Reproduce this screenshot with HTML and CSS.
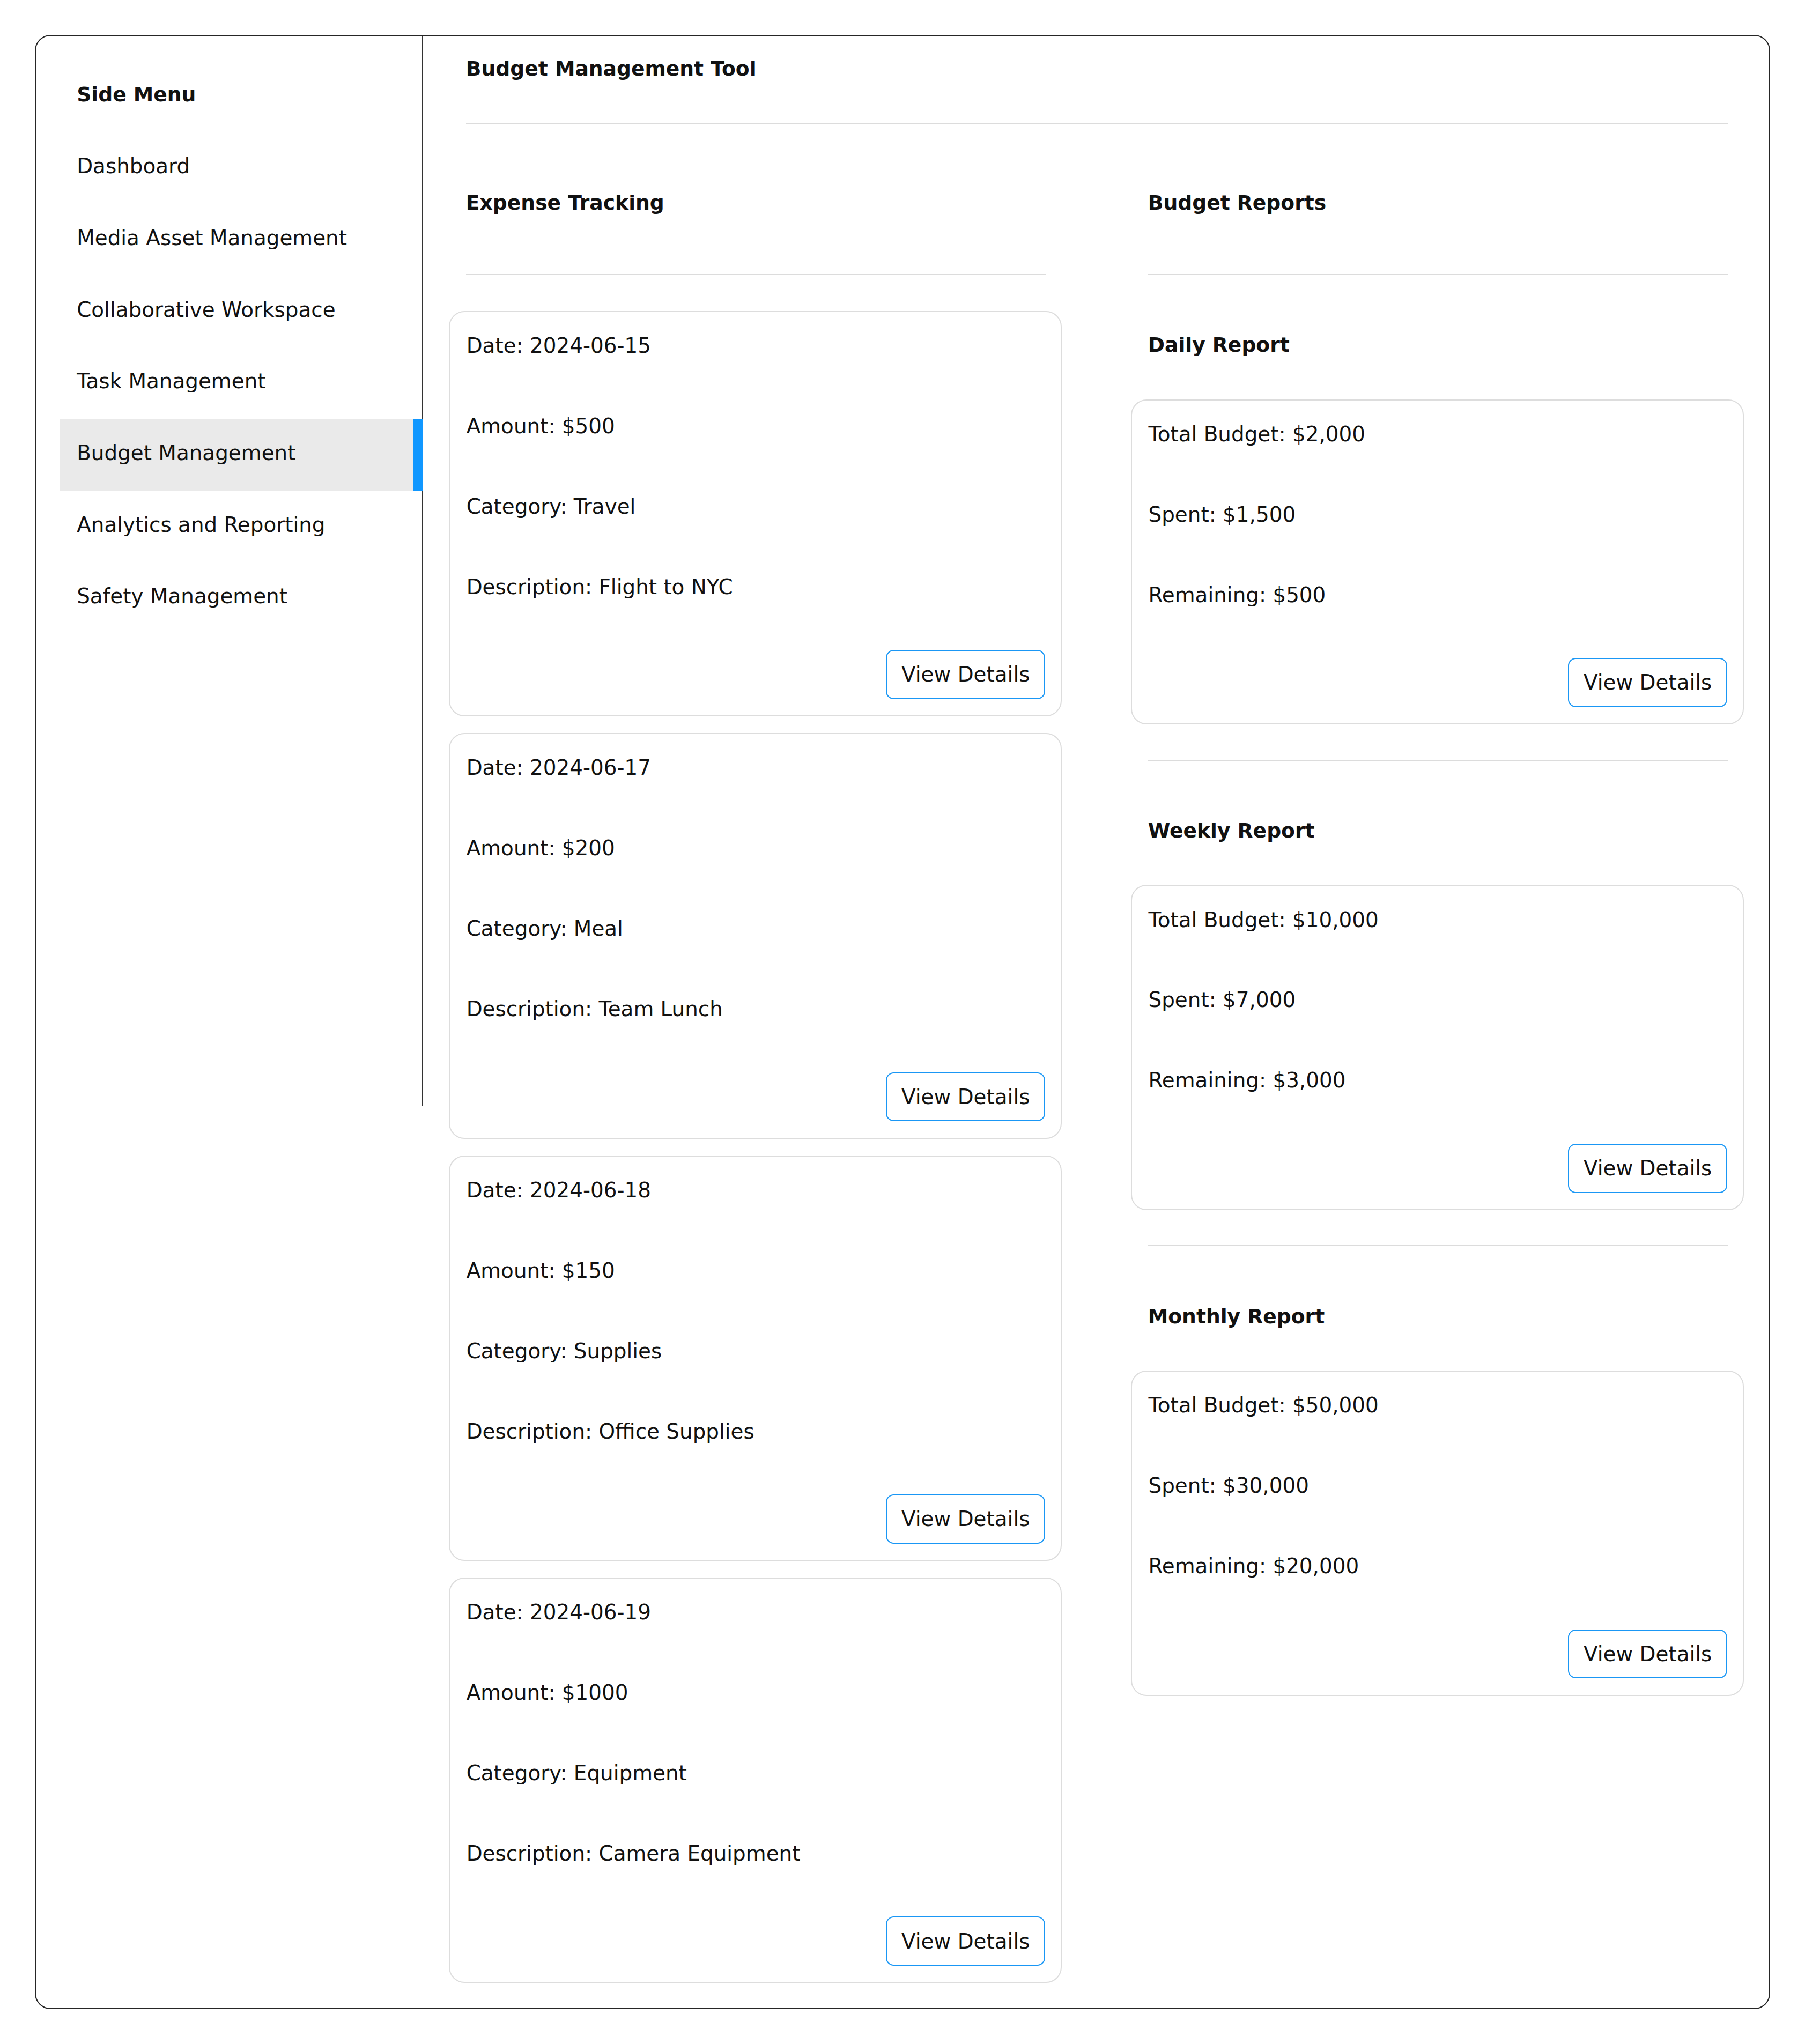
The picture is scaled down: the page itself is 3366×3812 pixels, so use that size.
FILE: index.html
```html
<!DOCTYPE html>
<html lang="en">
<head>
<meta charset="utf-8">
<title>Budget Management Tool</title>
<link rel="stylesheet" href="styles.css">
</head>
<body>
<div class="page">
  <div class="frame">
    <aside class="sidebar">
      <h2 class="side-title">Side Menu</h2>
      <nav class="menu">
        <a class="menu-item">Dashboard</a>
        <a class="menu-item">Media Asset Management</a>
        <a class="menu-item">Collaborative Workspace</a>
        <a class="menu-item">Task Management</a>
        <a class="menu-item active">Budget Management</a>
        <a class="menu-item">Analytics and Reporting</a>
        <a class="menu-item">Safety Management</a>
      </nav>
    </aside>
    <main class="main">
      <div class="head">
        <h1 class="heading">Budget Management Tool</h1>
        <hr class="divider top-divider">
      </div>
      <div class="columns">
        <section class="col">
          <div class="head">
            <h2 class="heading">Expense Tracking</h2>
            <hr class="divider col-divider">
          </div>
          <div class="card-list">
            <div class="card">
              <p>Date: 2024-06-15</p>
              <p>Amount: $500</p>
              <p>Category: Travel</p>
              <p>Description: Flight to NYC</p>
              <div class="actions"><button class="btn">View Details</button></div>
            </div>
            <div class="card">
              <p>Date: 2024-06-17</p>
              <p>Amount: $200</p>
              <p>Category: Meal</p>
              <p>Description: Team Lunch</p>
              <div class="actions"><button class="btn">View Details</button></div>
            </div>
            <div class="card">
              <p>Date: 2024-06-18</p>
              <p>Amount: $150</p>
              <p>Category: Supplies</p>
              <p>Description: Office Supplies</p>
              <div class="actions"><button class="btn">View Details</button></div>
            </div>
            <div class="card">
              <p>Date: 2024-06-19</p>
              <p>Amount: $1000</p>
              <p>Category: Equipment</p>
              <p>Description: Camera Equipment</p>
              <div class="actions"><button class="btn">View Details</button></div>
            </div>
          </div>
        </section>
        <section class="col">
          <div class="head">
            <h2 class="heading">Budget Reports</h2>
            <hr class="divider col-divider">
          </div>
          <div class="report">
            <div class="head"><h3 class="heading report-title">Daily Report</h3></div>
            <div class="card report-card">
              <p>Total Budget: $2,000</p>
              <p>Spent: $1,500</p>
              <p>Remaining: $500</p>
              <div class="actions"><button class="btn">View Details</button></div>
            </div>
          </div>
          <div class="head"><hr class="divider report-divider"></div>
          <div class="report">
            <div class="head"><h3 class="heading report-title">Weekly Report</h3></div>
            <div class="card report-card">
              <p>Total Budget: $10,000</p>
              <p>Spent: $7,000</p>
              <p>Remaining: $3,000</p>
              <div class="actions"><button class="btn">View Details</button></div>
            </div>
          </div>
          <div class="head"><hr class="divider report-divider"></div>
          <div class="report">
            <div class="head"><h3 class="heading report-title">Monthly Report</h3></div>
            <div class="card report-card">
              <p>Total Budget: $50,000</p>
              <p>Spent: $30,000</p>
              <p>Remaining: $20,000</p>
              <div class="actions"><button class="btn">View Details</button></div>
            </div>
          </div>
        </section>
      </div>
    </main>
  </div>
</div>
</body>
</html>
```
FILE: styles.css
```css
* {
  box-sizing: border-box;
}

body {
  margin: 0;
  zoom: 2.4303;
  font-family: "DejaVu Sans", "Liberation Sans", sans-serif;
  font-size: 16px;
  color: #111;
  background: #fff;
}

.page {
  padding: 26.7px;
}

.frame {
  display: flex;
  align-items: flex-start;
  border: 1px solid #262626;
  border-radius: 12px;
}

/* Sidebar */
.sidebar {
  flex: 0 0 297px;
  width: 297px;
  height: 821.2px;
  padding: 31px 0 0 18.4px;
  border-right: 1px solid #333;
}

.side-title {
  margin: 0 0 15.2px;
  padding-left: 13px;
  font-size: 15.5px;
  font-weight: bold;
  line-height: 28px;
}

.menu {
  display: flex;
  flex-direction: column;
  margin-right: -1px;
}

.menu-item {
  display: block;
  height: 55px;
  padding: 14.5px 13px 17.5px 13px;
  line-height: 23px;
  color: #111;
  text-decoration: none;
}

.menu-item.active {
  background: #eaeaea;
  border-right: 8px solid #1097ff;
}

/* Main */
.main {
  flex: 1;
  min-width: 0;
  padding: 11.2px 19.3px 19px 20px;
}

.head {
  padding: 0 12.5px 0 13px;
}

.heading {
  margin: 0;
  font-size: 15.5px;
  font-weight: bold;
  line-height: 28px;
}

.divider {
  border: 0;
  border-top: 1.2px solid #dcdcdc;
  height: 0;
  margin: 0;
}

.top-divider {
  margin-top: 28px;
}

.columns {
  display: grid;
  grid-template-columns: 1fr 1fr;
  column-gap: 53px;
  margin-top: 46px;
  align-items: start;
}

.col-divider {
  margin-top: 40.6px;
}

.card-list {
  display: flex;
  flex-direction: column;
  gap: 12.8px;
  margin-top: 27.6px;
}

.card {
  border: 1px solid #dddddd;
  border-radius: 12px;
  padding: 12px 12px 12.4px 12.5px;
}

.card p {
  margin: 0 0 33.7px;
  line-height: 28px;
}

.actions {
  display: flex;
  justify-content: flex-end;
  padding-top: 0.6px;
}

.btn {
  height: 37.8px;
  padding: 0 11px;
  border: 1px solid #1a97f5;
  border-radius: 6px;
  background: #fff;
  color: #111;
  font-family: "DejaVu Sans", "Liberation Sans", sans-serif;
  font-size: 16px;
  line-height: 35px;
}

.report-title {
  margin-top: 39.6px;
}

.report-card {
  margin-top: 27.8px;
}

.report-divider {
  margin-top: 27px;
}
```
